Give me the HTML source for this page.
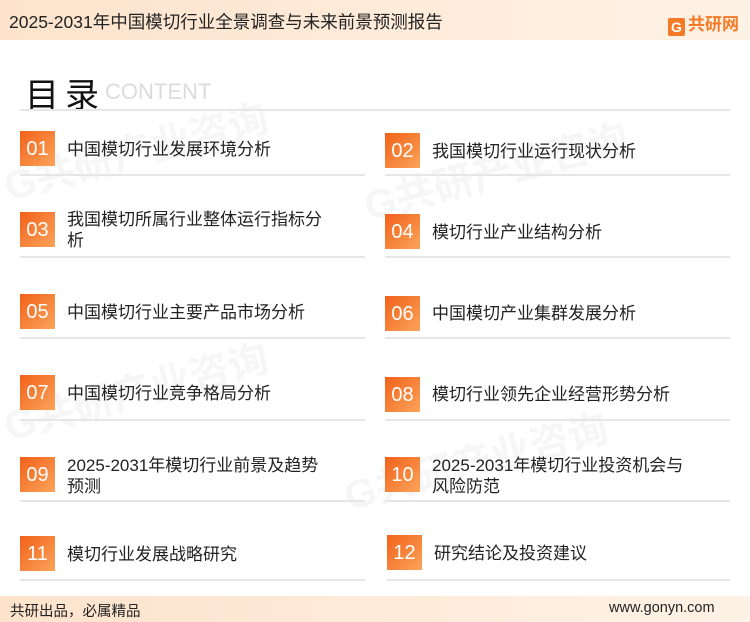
<!DOCTYPE html>
<html><head><meta charset="utf-8"><style>
body{margin:0;width:750px;height:622px;position:relative;overflow:hidden;background:#fff;font-family:"Liberation Sans","Noto Sans CJK SC",sans-serif;color:#222}
.hdr{position:absolute;left:0;top:0;width:750px;height:40px;background:linear-gradient(90deg,#fde3cc,#fef2e6)}
.hdr .t{position:absolute;left:9px;top:9px;font-size:17.5px;color:#222}
.logo{position:absolute;left:668px;top:10px;font-size:17px;font-weight:bold;color:#f47a26}
.logo b{display:inline-block;width:17px;height:18px;background:#f47a26;color:#fff;font-size:14px;text-align:center;line-height:18px;border-radius:2px;margin-right:3px;vertical-align:-2px}
.ml{position:absolute;left:25px;top:68px;font-size:34px;color:#111;letter-spacing:6px}
.ct{position:absolute;left:105px;top:79px;font-size:22px;color:#dcdcdc}
.ln{position:absolute;height:2px;background:#e6e6e6}
.b{position:absolute;width:35px;height:35px;background:linear-gradient(135deg,#f2611a,#fba45a);color:#fff;font-size:20px;text-align:center;line-height:37px}
.tx{position:absolute;font-size:17px;line-height:21px;color:#222}
.ftr{position:absolute;left:0;top:596px;width:750px;height:26px;background:linear-gradient(90deg,#fde3cc,#fef2e6)}
.ftr span{position:absolute;top:4px;font-size:14.5px;color:#222}
.wm{position:absolute;font-size:40px;font-weight:bold;color:#f6f6f6;transform:rotate(-15deg);white-space:nowrap;z-index:0}
</style></head><body>
<div class="wm" style="left:0;top:120px">G共研产业咨询</div>
<div class="wm" style="left:360px;top:140px">G共研产业咨询</div>
<div class="wm" style="left:0;top:360px">G共研产业咨询</div>
<div class="wm" style="left:340px;top:430px">G共研产业咨询</div>
<div class="hdr"><div class="t">2025-2031年中国模切行业全景调查与未来前景预测报告</div><div class="logo"><b>G</b>共研网</div></div>
<div class="ml">目录</div><div class="ct">CONTENT</div>
<div class="ln" style="left:20px;top:109px;width:710px"></div>

<div class="b" style="left:20px;top:131px">01</div><div class="tx" style="left:67px;top:139px">中国模切行业发展环境分析</div>
<div class="ln" style="left:20px;top:174px;width:345px"></div>
<div class="b" style="left:385px;top:133px">02</div><div class="tx" style="left:432px;top:141px">我国模切行业运行现状分析</div>
<div class="ln" style="left:385px;top:174px;width:345px"></div>

<div class="b" style="left:20px;top:212px">03</div><div class="tx" style="left:67px;top:209px">我国模切所属行业整体运行指标分<br>析</div>
<div class="ln" style="left:20px;top:256px;width:345px"></div>
<div class="b" style="left:385px;top:214px">04</div><div class="tx" style="left:432px;top:222px">模切行业产业结构分析</div>
<div class="ln" style="left:385px;top:256px;width:345px"></div>

<div class="b" style="left:20px;top:294px">05</div><div class="tx" style="left:67px;top:302px">中国模切行业主要产品市场分析</div>
<div class="ln" style="left:20px;top:337px;width:345px"></div>
<div class="b" style="left:385px;top:296px">06</div><div class="tx" style="left:432px;top:303px">中国模切产业集群发展分析</div>
<div class="ln" style="left:385px;top:337px;width:345px"></div>

<div class="b" style="left:20px;top:375px">07</div><div class="tx" style="left:67px;top:383px">中国模切行业竞争格局分析</div>
<div class="ln" style="left:20px;top:419px;width:345px"></div>
<div class="b" style="left:385px;top:377px">08</div><div class="tx" style="left:432px;top:384px">模切行业领先企业经营形势分析</div>
<div class="ln" style="left:385px;top:419px;width:345px"></div>

<div class="b" style="left:20px;top:457px">09</div><div class="tx" style="left:67px;top:455px">2025-2031年模切行业前景及趋势<br>预测</div>
<div class="ln" style="left:20px;top:500px;width:345px"></div>
<div class="b" style="left:385px;top:457px">10</div><div class="tx" style="left:432px;top:455px">2025-2031年模切行业投资机会与<br>风险防范</div>
<div class="ln" style="left:385px;top:500px;width:345px"></div>

<div class="b" style="left:20px;top:536px">11</div><div class="tx" style="left:67px;top:544px">模切行业发展战略研究</div>
<div class="ln" style="left:20px;top:579px;width:345px"></div>
<div class="b" style="left:387px;top:535px">12</div><div class="tx" style="left:434px;top:543px">研究结论及投资建议</div>
<div class="ln" style="left:387px;top:579px;width:343px"></div>

<div class="ftr"><span style="left:10px">共研出品，必属精品</span><span style="left:609px">www.gonyn.com</span></div>
</body></html>
